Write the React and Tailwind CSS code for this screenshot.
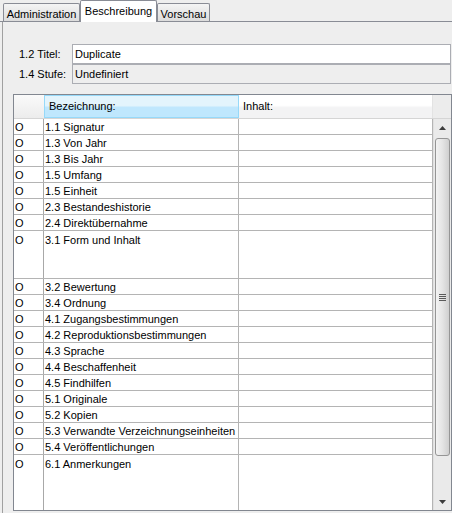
import React from 'react';

const rows = [
    { code: '1.1', name: 'Signatur' },
    { code: '1.3', name: 'Von Jahr' },
    { code: '1.3', name: 'Bis Jahr' },
    { code: '1.5', name: 'Umfang' },
    { code: '1.5', name: 'Einheit' },
    { code: '2.3', name: 'Bestandeshistorie' },
    { code: '2.4', name: 'Direktübernahme' },
    { code: '3.1', name: 'Form und Inhalt', tall: true },
    { code: '3.2', name: 'Bewertung' },
    { code: '3.4', name: 'Ordnung' },
    { code: '4.1', name: 'Zugangsbestimmungen' },
    { code: '4.2', name: 'Reproduktionsbestimmungen' },
    { code: '4.3', name: 'Sprache' },
    { code: '4.4', name: 'Beschaffenheit' },
    { code: '4.5', name: 'Findhilfen' },
    { code: '5.1', name: 'Originale' },
    { code: '5.2', name: 'Kopien' },
    { code: '5.3', name: 'Verwandte Verzeichnungseinheiten' },
    { code: '5.4', name: 'Veröffentlichungen' },
    { code: '6.1', name: 'Anmerkungen', last: true },
];

const Tab = ({ label, active, width }) => (
    <div
        className={
            active
                ? `relative z-10 -mb-px h-[22px] ${width} text-center pt-[2px] bg-white border border-b-0 border-[#898c95] rounded-t-[2px]`
                : `h-[18px] ${width} text-center pt-[2px] bg-gradient-to-b from-[#f4f4f4] to-[#dcdcdc] border border-b-0 border-[#898c95] rounded-t-[2px]`
        }
    >
        {label}
    </div>
);

const Row = ({ row }) => {
    const height = row.last ? 'flex-1' : row.tall ? 'h-[48px] border-b' : 'h-[16px] border-b';
    const pad = row.tall || row.last ? 'pt-[2px]' : 'pt-[1px]';
    return (
        <div className={`flex ${height} border-[#b4b4b4]`}>
            <div className={`w-[30px] shrink-0 border-r border-[#a8a8a8] pl-[1px] leading-[14px] ${pad}`}>O</div>
            <div className={`w-[195px] shrink-0 border-r border-[#b4b4b4] pl-[1px] leading-[14px] whitespace-nowrap ${pad}`}>
                {row.code} {row.name}
            </div>
            <div className="w-[194px] shrink-0 border-r border-[#b4b4b4]" />
        </div>
    );
};

const Scrollbar = () => (
    <div className="w-[18px] shrink-0 flex flex-col bg-[#eaeaea] border-l border-[#e0e0e0]">
        <div className="h-[17px] flex items-center justify-center">
            <svg width="7" height="4" viewBox="0 0 7 4"><path d="M0 4 L3.5 0 L7 4 Z" fill="#3c3c3c" /></svg>
        </div>
        <div className="h-[2px]" />
        <div className="mx-[1px] h-[318px] rounded-[3px] border border-[#959595] bg-gradient-to-r from-[#f3f3f3] via-[#e4e4e4] to-[#cfcfcf] flex items-center justify-center">
            <div className="flex flex-col gap-[1px]">
                <div className="w-[7px] h-[1px] bg-[#5a5a5a]" />
                <div className="w-[7px] h-[1px] bg-[#5a5a5a]" />
                <div className="w-[7px] h-[1px] bg-[#5a5a5a]" />
                <div className="w-[7px] h-[1px] bg-[#5a5a5a]" />
            </div>
        </div>
        <div className="flex-1" />
        <div className="h-[17px] flex items-center justify-center">
            <svg width="7" height="4" viewBox="0 0 7 4"><path d="M0 0 L7 0 L3.5 4 Z" fill="#3c3c3c" /></svg>
        </div>
    </div>
);

export default function App() {
    return (
        <div
            className="w-[452px] h-[513px] overflow-hidden bg-[#eeeeee] text-black text-[11px] flex flex-col"
            style={{ fontFamily: '"Liberation Sans", Arial, sans-serif' }}
        >
            <div className="h-[22px] shrink-0 flex items-end pl-[3px] border-b border-[#898c95]">
                <Tab label="Administration" width="w-[77px]" />
                <Tab label="Beschreibung" width="w-[77px]" active />
                <Tab label="Vorschau" width="w-[53px]" />
            </div>

            <div className="flex-1 flex flex-col ml-[2px] border-l border-[#a0a0a0] min-h-0">
                <div className="pt-[22px] pl-[16px] flex flex-col">
                    <div className="flex h-[20px] items-center">
                        <div className="w-[53px]">1.2 Titel:</div>
                        <div className="w-[379px] h-[20px] bg-white border border-[#abadb3] pl-[2px] leading-[18px]">Duplicate</div>
                    </div>
                    <div className="flex h-[20px] items-center">
                        <div className="w-[53px]">1.4 Stufe:</div>
                        <div className="w-[379px] h-[20px] bg-[#eeeeee] border border-[#abadb3] pl-[2px] leading-[18px]">Undefiniert</div>
                    </div>
                </div>

                <div className="mt-[10px] ml-[10px] w-[439px] h-[417px] border border-[#828790] bg-white flex flex-col">
                    <div className="h-[24px] shrink-0 flex border-b border-[#d5d5d5]">
                        <div className="w-[30px] shrink-0 bg-gradient-to-b from-[#fafafa] to-[#ececec]" />
                        <div className="w-[195px] shrink-0 border border-[#96d9f9] bg-[linear-gradient(#e3f4fc_0%,#e3f4fc_45%,#bfe7fd_55%,#bfe7fd_100%)] pl-[4px] leading-[21px]">
                            Bezeichnung:
                        </div>
                        <div className="w-[194px] shrink-0 border-r border-[#e3e3e3] bg-[linear-gradient(#ffffff_0%,#ffffff_45%,#f3f3f4_55%,#f3f3f4_100%)] pl-[4px] leading-[23px]">
                            Inhalt:
                        </div>
                        <div className="flex-1 bg-[#ececec]" />
                    </div>
                    <div className="flex-1 flex min-h-0">
                        <div className="w-[419px] shrink-0 flex flex-col">
                            {rows.map((r, i) => (
                                <Row key={i} row={r} />
                            ))}
                        </div>
                        <Scrollbar />
                    </div>
                </div>
            </div>
        </div>
    );
}
